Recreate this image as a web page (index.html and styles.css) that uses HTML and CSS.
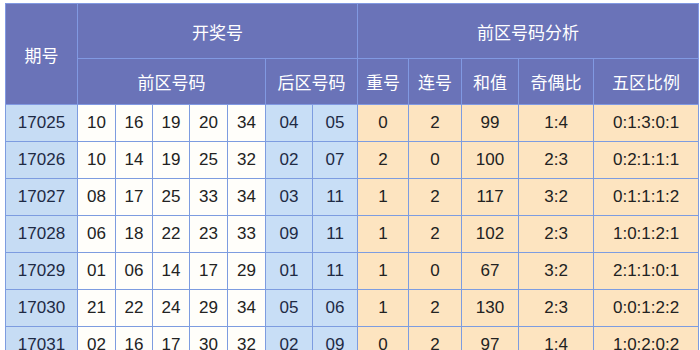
FILE: index.html
```html
<!DOCTYPE html>
<html lang="zh">
<head>
<meta charset="utf-8">
<link rel="stylesheet" href="styles.css">
</head>
<body>
<div class="wrap">
<table class="lotto">
  <colgroup>
    <col class="c-id"><col class="c-f1"><col class="c-f"><col class="c-f"><col class="c-f1"><col class="c-f1"><col class="c-b1"><col class="c-b2"><col class="c-rep"><col class="c-con"><col class="c-sum"><col class="c-oe"><col class="c-five">
  </colgroup>
  <thead>
    <tr class="h1">
      <th rowspan="2">期号</th>
      <th colspan="7">开奖号</th>
      <th colspan="5">前区号码分析</th>
    </tr>
    <tr class="h2">
      <th colspan="5">前区号码</th>
      <th colspan="2">后区号码</th>
      <th>重号</th>
      <th>连号</th>
      <th>和值</th>
      <th>奇偶比</th>
      <th>五区比例</th>
    </tr>
  </thead>
  <tbody>
    <tr><td class="id">17025</td><td class="fr">10</td><td class="fr">16</td><td class="fr">19</td><td class="fr">20</td><td class="fr">34</td><td class="bk">04</td><td class="bk">05</td><td class="an">0</td><td class="an">2</td><td class="an">99</td><td class="an">1:4</td><td class="an">0:1:3:0:1</td></tr>
    <tr><td class="id">17026</td><td class="fr">10</td><td class="fr">14</td><td class="fr">19</td><td class="fr">25</td><td class="fr">32</td><td class="bk">02</td><td class="bk">07</td><td class="an">2</td><td class="an">0</td><td class="an">100</td><td class="an">2:3</td><td class="an">0:2:1:1:1</td></tr>
    <tr><td class="id">17027</td><td class="fr">08</td><td class="fr">17</td><td class="fr">25</td><td class="fr">33</td><td class="fr">34</td><td class="bk">03</td><td class="bk">11</td><td class="an">1</td><td class="an">2</td><td class="an">117</td><td class="an">3:2</td><td class="an">0:1:1:1:2</td></tr>
    <tr><td class="id">17028</td><td class="fr">06</td><td class="fr">18</td><td class="fr">22</td><td class="fr">23</td><td class="fr">33</td><td class="bk">09</td><td class="bk">11</td><td class="an">1</td><td class="an">2</td><td class="an">102</td><td class="an">2:3</td><td class="an">1:0:1:2:1</td></tr>
    <tr><td class="id">17029</td><td class="fr">01</td><td class="fr">06</td><td class="fr">14</td><td class="fr">17</td><td class="fr">29</td><td class="bk">01</td><td class="bk">11</td><td class="an">1</td><td class="an">0</td><td class="an">67</td><td class="an">3:2</td><td class="an">2:1:1:0:1</td></tr>
    <tr><td class="id">17030</td><td class="fr">21</td><td class="fr">22</td><td class="fr">24</td><td class="fr">29</td><td class="fr">34</td><td class="bk">05</td><td class="bk">06</td><td class="an">1</td><td class="an">2</td><td class="an">130</td><td class="an">2:3</td><td class="an">0:0:1:2:2</td></tr>
    <tr><td class="id">17031</td><td class="fr">02</td><td class="fr">16</td><td class="fr">17</td><td class="fr">30</td><td class="fr">32</td><td class="bk">02</td><td class="bk">09</td><td class="an">0</td><td class="an">2</td><td class="an">97</td><td class="an">1:4</td><td class="an">1:0:2:0:2</td></tr>
  </tbody>
</table>
</div>
</body>
</html>
```
FILE: styles.css
```css
html, body {
  margin: 0;
  padding: 0;
  background: #ffffff;
  overflow: hidden;
}
.wrap {
  padding: 3px 0 0 5px;
}
.lotto {
  border-collapse: collapse;
  table-layout: fixed;
  width: 693px;
  font-family: "Liberation Sans", Arial, "Noto Sans CJK SC", sans-serif;
  font-size: 17px;
}
.c-id { width: 72px; }
.c-f1 { width: 38px; }
.c-f { width: 37px; }
.c-b1 { width: 47px; }
.c-b2 { width: 45px; }
.c-rep { width: 51px; }
.c-con { width: 53px; }
.c-sum { width: 57px; }
.c-oe { width: 75px; }
.c-five { width: 105px; }

.lotto th {
  background: #6a73b8;
  color: #ffffff;
  font-family: "Noto Sans CJK SC", "Liberation Sans", sans-serif;
  font-weight: normal;
  font-size: 17px;
  border: 1px solid #8199e2;
  padding: 0;
  text-align: center;
}
.h1 th { height: 54px; }
.h2 th { height: 45px; }
.lotto td {
  border: 1px solid #7d9ce0;
  padding: 0;
  height: 36px;
  text-align: center;
  color: #222222;
}
.lotto td.id { background: #c6dcf4; color: #1e2a44; }
.lotto td.fr { background: #fffefa; }
.lotto td.bk { background: #c8def6; color: #1e2a44; }
.lotto td.an { background: #fde4c0; }
```
